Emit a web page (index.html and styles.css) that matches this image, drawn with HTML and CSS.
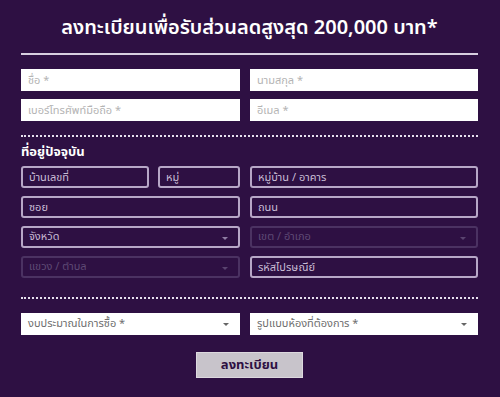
FILE: index.html
```html
<!DOCTYPE html>
<html lang="th">
<head>
  <meta charset="UTF-8">
  <meta name="viewport" content="width=device-width, initial-scale=1">
  <title>ลงทะเบียน</title>
  <link rel="stylesheet" href="styles.css">
</head>
<body>

  <form class="register">
    <h1>ลงทะเบียนเพื่อรับส่วนลดสูงสุด 200,000 บาท*</h1>

    <div class="row">
      <input type="text" class="light" placeholder="ชื่อ *">
      <input type="text" class="light" placeholder="นามสกุล *">
      <input type="tel" class="light" placeholder="เบอร์โทรศัพท์มือถือ *">
      <input type="email" class="light" placeholder="อีเมล *">
    </div>

    <div class="dots"></div>

    <h2>ที่อยู่ปัจจุบัน</h2>

    <div class="row address">
      <div class="pair">
        <input type="text" class="dark" placeholder="บ้านเลขที่">
        <input type="text" class="dark" placeholder="หมู่">
      </div>
      <input type="text" class="dark" placeholder="หมู่บ้าน / อาคาร">
      <input type="text" class="dark" placeholder="ซอย">
      <input type="text" class="dark" placeholder="ถนน">
      <div class="select dark">จังหวัด</div>
      <div class="select dark off">เขต / อำเภอ</div>
      <div class="select dark off">แขวง / ตำบล</div>
      <input type="text" class="dark" placeholder="รหัสไปรษณีย์">
    </div>

    <div class="dots low"></div>

    <div class="row">
      <div class="select light">งบประมาณในการซื้อ *</div>
      <div class="select light">รูปแบบห้องที่ต้องการ *</div>
    </div>

    <button type="button">ลงทะเบียน</button>
  </form>

</body>
</html>
```

FILE: styles.css
```css
body {
  margin: 0;
  background: #2e1043;
  font-family: "Noto Sans Thai", "Noto Sans", sans-serif;
}
.register {
  width: 457px;
  margin: 0 0 0 21px;
  padding: 14px 0 18px;
}
h1 {
  margin: 0;
  padding-bottom: 10px;
  border-bottom: 2px solid #d8cfe0;
  text-align: center;
  color: white;
  font-size: 20px;
  line-height: 29px;
  font-weight: 600;
}
h2 {
  margin: 6px 0 5px;
  color: white;
  font-size: 13px;
  line-height: 18px;
  font-weight: bold;
}
.row {
  display: grid;
  grid-template-columns: 219px 228px;
  column-gap: 10px;
  row-gap: 8px;
  margin-top: 14px;
}
.address {
  margin-top: 0;
}
.pair {
  display: grid;
  grid-template-columns: 128px 82px;
  column-gap: 9px;
}
input, .select {
  box-sizing: border-box;
  height: 22px;
  width: 100%;
  margin: 0;
  padding: 0 6px;
  font-family: inherit;
  font-size: 11px;
  line-height: 18px;
  outline: none;
}
.light {
  background: white;
  border: 1px solid #ffffff;
  border-radius: 0;
  color: #aaa;
}
.light::placeholder {
  color: #b4b4b4;
}
.dark {
  background: #2e1043;
  border: 2px solid #b7a7c7;
  border-radius: 3px;
  color: #c9bdd6;
}
.dark::placeholder {
  color: #c9bdd6;
}
.select {
  position: relative;
  display: flex;
  align-items: center;
}
.select::after {
  content: "";
  position: absolute;
  right: 10px;
  top: 9px;
  border-left: 3px solid transparent;
  border-right: 3px solid transparent;
  border-top: 3px solid #666;
}
.select.light {
  color: #6e6e6e;
}
.select.dark::after {
  border-top-color: #8f7ea4;
}
.select.off {
  border-color: #4b3262;
  color: #5e4a75;
}
.select.off::after {
  border-top-color: #5a4470;
}
.dots {
  margin-top: 14px;
  border-top: 2px dotted #e6dfee;
}
.dots.low {
  margin-top: 19px;
}
button {
  display: block;
  width: 107px;
  height: 26px;
  margin: 17px auto 0;
  background: #c8c4cb;
  border: 1px solid #dcd8de;
  color: #2e1043;
  font-family: inherit;
  font-size: 13px;
  font-weight: bold;
  cursor: pointer;
}
```
